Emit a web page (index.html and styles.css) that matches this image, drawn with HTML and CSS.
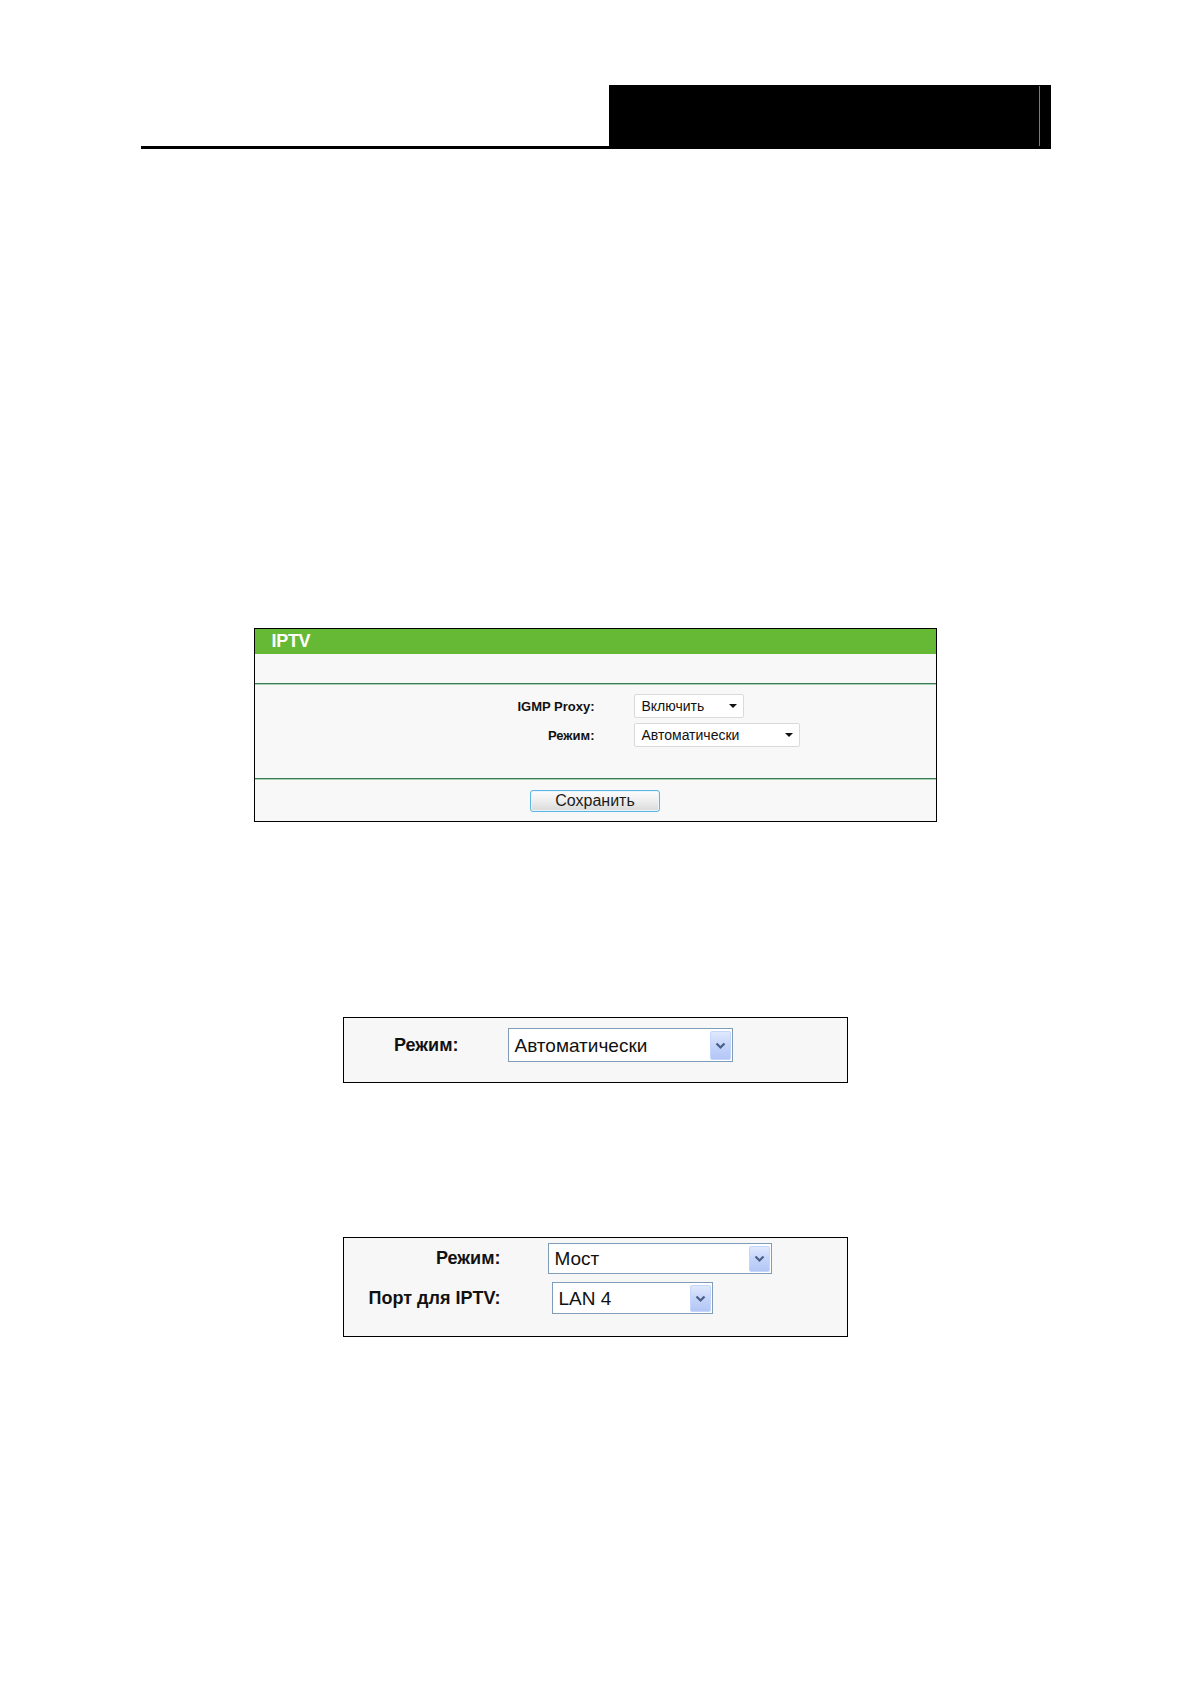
FILE: index.html
```html
<!DOCTYPE html>
<html lang="ru">
<head>
<meta charset="utf-8">
<title>IPTV</title>
<link rel="stylesheet" href="styles.css">
</head>
<body>
<div class="page">
  <header class="top">
    <div class="rule"></div>
    <div class="blackbox"><span class="vline"></span></div>
  </header>
</div>

<section class="iptv">
  <div class="iptv-head">IPTV</div>
  <div class="iptv-spacer"></div>
  <div class="sep"></div>
  <div class="iptv-form">
    <span class="lbl">IGMP Proxy:</span>
    <div class="sel sel-short"><span class="sel-text">Включить</span><span class="tri"></span></div>
    <span class="lbl">Режим:</span>
    <div class="sel sel-long"><span class="sel-text">Автоматически</span><span class="tri"></span></div>
  </div>
  <div class="sep"></div>
  <div class="iptv-foot">
    <button class="save" type="button">Сохранить</button>
  </div>
</section>

<section class="box mode-box">
  <span class="xlbl">Режим:</span>
  <div class="xsel xsel-mode">
    <span class="xsel-text">Автоматически</span>
    <span class="xbtn"><svg width="11" height="8" viewBox="0 0 11 8"><path d="M1.5 1.5 L5.5 5.5 L9.5 1.5" fill="none" stroke="#4a5f86" stroke-width="2.2"/></svg></span>
  </div>
</section>

<section class="box bridge-box">
  <span class="xlbl">Режим:</span>
  <div class="xsel xsel-bridge">
    <span class="xsel-text">Мост</span>
    <span class="xbtn"><svg width="11" height="8" viewBox="0 0 11 8"><path d="M1.5 1.5 L5.5 5.5 L9.5 1.5" fill="none" stroke="#4a5f86" stroke-width="2.2"/></svg></span>
  </div>
  <span class="xlbl">Порт для IPTV:</span>
  <div class="xsel xsel-port">
    <span class="xsel-text">LAN 4</span>
    <span class="xbtn"><svg width="11" height="8" viewBox="0 0 11 8"><path d="M1.5 1.5 L5.5 5.5 L9.5 1.5" fill="none" stroke="#4a5f86" stroke-width="2.2"/></svg></span>
  </div>
</section>
</body>
</html>
```

FILE: styles.css
```css
html, body {
  margin: 0;
  padding: 0;
  background: #ffffff;
  font-family: "Liberation Sans", Arial, sans-serif;
  color: #000;
}

.page {
  width: 910px;
  margin-left: 141px;
  padding-top: 85px;
}

.top {
  display: flex;
  align-items: flex-end;
  height: 64px;
}

.rule {
  flex: 1;
  height: 3px;
  background: #000;
}

.blackbox {
  width: 442px;
  height: 64px;
  background: #000;
  display: flex;
  justify-content: flex-end;
  align-items: flex-start;
  padding-right: 11px;
  box-sizing: border-box;
}

.vline {
  display: block;
  width: 1px;
  height: 60px;
  margin-top: 1px;
  background: #7a7a7a;
}

/* IPTV panel */
.iptv {
  width: 683px;
  box-sizing: border-box;
  margin: 479px auto 0;
  border: 1px solid #000;
  background: #f8f8f8;
}

.iptv-head {
  height: 25px;
  line-height: 25px;
  background: #66b934;
  color: #fff;
  font-weight: bold;
  font-size: 18px;
  padding-left: 17px;
  letter-spacing: -0.3px;
}

.iptv-spacer {
  height: 29px;
}

.sep {
  height: 0;
  border-top: 1px solid #3b7b55;
  border-bottom: 1px solid #a8d0b2;
}

.iptv-form {
  display: grid;
  grid-template-columns: 340px auto;
  column-gap: 39px;
  row-gap: 5px;
  align-items: center;
  padding: 9px 0 31px;
}

.lbl {
  text-align: right;
  font-weight: bold;
  font-size: 13px;
  color: #111;
}

.sel {
  height: 24px;
  box-sizing: border-box;
  border: 1px solid #dadada;
  border-radius: 2px;
  background: #fff;
  display: flex;
  align-items: center;
  padding: 0 6px 0 7px;
  font-size: 14px;
  color: #111;
}

.sel-short { width: 110px; }
.sel-long { width: 166px; }

.sel-text { flex: 1; }

.tri {
  width: 0;
  height: 0;
  border-left: 4px solid transparent;
  border-right: 4px solid transparent;
  border-top: 4px solid #111;
}

.iptv-foot {
  height: 41px;
  display: flex;
  align-items: center;
  justify-content: center;
}

.save {
  width: 130px;
  height: 22px;
  box-sizing: border-box;
  border: 1px solid #5fb4e3;
  border-radius: 3px;
  background: linear-gradient(#fdfdfd, #ececec 55%, #d9d9d9);
  box-shadow: inset 0 0 0 1px #e9f5fc;
  font-family: "Liberation Sans", Arial, sans-serif;
  font-size: 16px;
  color: #1c1c1c;
  padding: 0;
  line-height: 20px;
  margin-top: 1px;
}

/* Boxed examples */
.box {
  width: 505px;
  box-sizing: border-box;
  margin: 0 auto;
  border: 1px solid #000;
  background: #f7f7f7;
  display: grid;
  align-items: center;
}

.mode-box {
  margin-top: 195px;
  height: 66px;
  grid-template-columns: 115px 225px;
  column-gap: 49px;
  padding: 0;
  align-content: center;
  padding-bottom: 10px;
}

.bridge-box {
  margin-top: 154px;
  height: 100px;
  grid-template-columns: 157px auto;
  column-gap: 47px;
  row-gap: 8px;
  align-content: start;
  padding-top: 5px;
}

.xlbl {
  text-align: right;
  font-weight: bold;
  font-size: 18px;
  color: #111;
}

.xsel {
  box-sizing: border-box;
  border: 1px solid #7f9db9;
  background: #fff;
  display: flex;
  align-items: stretch;
  padding: 2px 1px 1px 6px;
  font-size: 19px;
  color: #111;
}

.xsel-text {
  flex: 1;
  display: flex;
  align-items: center;
}

.xsel-mode { width: 225px; height: 34px; }
.xsel-bridge { width: 224px; height: 31px; }
.xsel-port { width: 161px; height: 32px; margin-left: 4px; }

.xbtn {
  width: 21px;
  box-sizing: border-box;
  border: 1px solid #c6d5fb;
  border-radius: 2px;
  background: linear-gradient(#dfe8fd, #c4d4fa 50%, #b3c6f5);
  display: flex;
  align-items: center;
  justify-content: center;
}
```
